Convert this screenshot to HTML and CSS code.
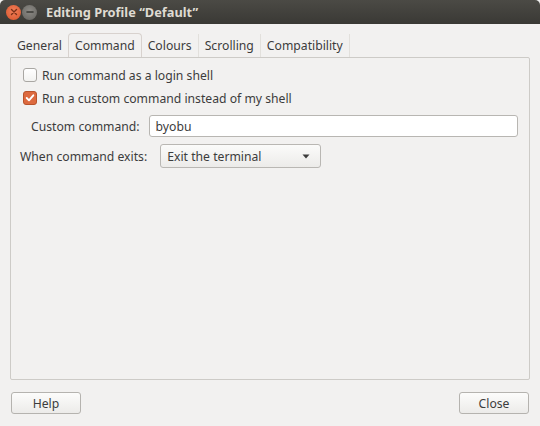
FILE: index.html
```html
<!DOCTYPE html>
<html>
<head>
<meta charset="utf-8">
<link rel="stylesheet" href="styles.css">
</head>
<body>
<div class="window">
  <div class="titlebar">
    <span class="wbtn close"><svg width="14" height="14" viewBox="0 0 14 14"><path d="M4.5 4.5 L9.5 9.5 M9.5 4.5 L4.5 9.5" stroke="#7a3018" stroke-width="1.4" stroke-linecap="round"/></svg></span>
    <span class="wbtn min"><svg width="14" height="14" viewBox="0 0 14 14"><path d="M4 7 H10" stroke="#3a3a36" stroke-width="1.6" stroke-linecap="round"/></svg></span>
    <span class="title">Editing Profile “Default”</span>
  </div>
  <div class="content">
    <div class="tabs">
      <span class="tab">General</span>
      <span class="tab active">Command</span>
      <span class="tab">Colours</span>
      <span class="tab">Scrolling</span>
      <span class="tab">Compatibility</span>
    </div>
    <div class="page">
      <label class="check"><span class="box"></span>Run command as a login shell</label>
      <label class="check"><span class="box checked"><svg width="12" height="12" viewBox="0 0 12 12"><path d="M2.7 6 L5 8.3 L9.3 3.3" fill="none" stroke="#fff" stroke-width="1.9" stroke-linecap="round" stroke-linejoin="round"/></svg></span>Run a custom command instead of my shell</label>
      <div class="row indent">
        <span class="lbl">Custom command:</span>
        <span class="entry">byobu</span>
      </div>
      <div class="row">
        <span class="lbl wide">When command exits:</span>
        <span class="combo"><span>Exit the terminal</span><svg width="8" height="5" viewBox="0 0 8 5"><path d="M0.5 0.5 H7.5 L4 4.5 Z" fill="#3c3c3c"/></svg></span>
      </div>
    </div>
    <div class="buttons">
      <span class="btn">Help</span>
      <span class="btn">Close</span>
    </div>
  </div>
</div>
</body>
</html>
```
FILE: styles.css
```css
html, body { margin: 0; padding: 0; }
body {
  width: 540px; height: 426px; overflow: hidden;
  font-family: "Noto Sans", "DejaVu Sans", sans-serif;
  font-size: 12.2px; color: #3c3c3c;
  background: #f2f1f0;
}
.window { display: flex; flex-direction: column; height: 426px; }
.titlebar {
  height: 24px; flex: none;
  background: linear-gradient(#4b4a45, #3a3935);
  display: flex; align-items: center;
  padding-left: 6px;
  border-radius: 5px 5px 0 0;
}
.wbtn {
  width: 15px; height: 15px; border-radius: 50%;
  display: inline-flex; align-items: center; justify-content: center;
  margin-right: 1px;
}
.wbtn.close { background: radial-gradient(circle at 50% 40%, #f0805a, #d9532a); }
.wbtn.min { background: radial-gradient(circle at 50% 40%, #8d8b86, #63625e); }
.title {
  margin-left: 8px; color: #dfdbd2; font-weight: bold; font-size: 12.8px;
}
.content { flex: 1; display: flex; flex-direction: column; padding: 0 10px 0 10px; }
.tabs {
  display: flex; padding-left: 1px; height: 33px; align-items: flex-end;
}
.tab {
  padding: 3px 6px 3px 6px; color: #3c3c3c; border-right: 1px solid #e2e0dc;
}
.tab:first-child { border-right: none; }
.tab.active {
  padding: 3px 6px 3px 6px;
  border: 1px solid #d8d2ce; border-bottom: none; border-radius: 4px 4px 0 0;
}
.page {
  height: 323px; flex: none;
  border: 1px solid #cdcbc7; border-radius: 0 2px 2px 2px;
  padding: 8px 10px 0 9px;
  display: flex; flex-direction: column;
  box-sizing: border-box;
}
.check { display: flex; align-items: center; height: 18px; margin-bottom: 5px; margin-left: 3px; }
.box {
  width: 12px; height: 12px; border: 1px solid #a9a7a3; border-radius: 3px;
  background: linear-gradient(#fff, #f2f2f0); margin-right: 5px;
  display: inline-flex; align-items: center; justify-content: center;
}
.box.checked { background: #dd6a3f; border-color: #b8532b; }
.box.checked svg { flex: none; }
.row { display: flex; align-items: center; margin-top: 7px; }
.indent { padding-left: 11px; margin-top: 3px; }
.lbl { margin-right: 9px; }
.lbl.wide { margin-right: 13px; }
.entry {
  flex: 1; height: 22px; box-sizing: border-box; margin-right: 1px;
  border: 1px solid #b8b6b2; border-radius: 3px; background: #fff;
  display: flex; align-items: center; padding-left: 6px;
}
.combo {
  width: 161px; height: 24px; box-sizing: border-box;
  border: 1px solid #b9b7b3; border-radius: 3px;
  background: linear-gradient(#fbfbfa, #ecebe9);
  display: flex; align-items: center; justify-content: space-between;
  padding: 0 10px 0 6px;
}
.buttons {
  display: flex; justify-content: space-between; padding: 12px 1px 0 1px;
}
.btn {
  width: 70px; height: 22px; box-sizing: border-box;
  border: 1px solid #b5b3af; border-radius: 3px;
  background: linear-gradient(#fcfcfb, #ecebe9);
  display: flex; align-items: center; justify-content: center;
}
```
